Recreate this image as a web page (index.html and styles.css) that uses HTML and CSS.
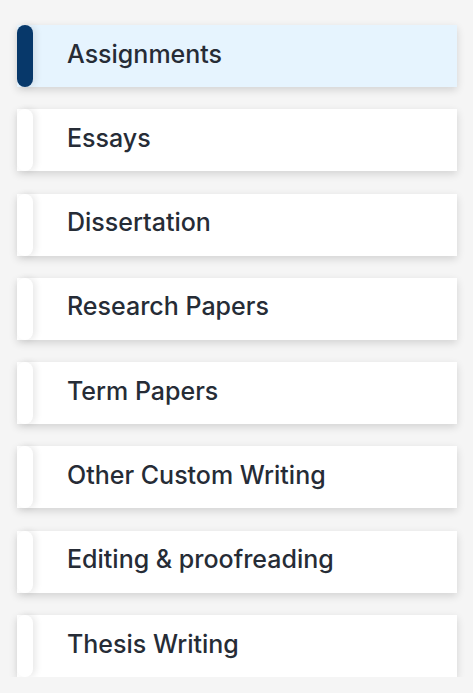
FILE: index.html
```html
<!DOCTYPE html>
<html lang="en">
  <head>
    <meta charset="UTF-8" />
    <meta name="viewport" content="width=device-width, initial-scale=1.0" />
    <title>Services</title>
    <link rel="stylesheet" href="styles.css">
  </head>
  <body>
    <ul class="service-list">
      <li class="service-item active"><span class="marker"></span><span class="label">Assignments</span></li>
      <li class="service-item"><span class="marker"></span><span class="label">Essays</span></li>
      <li class="service-item"><span class="marker"></span><span class="label">Dissertation</span></li>
      <li class="service-item"><span class="marker"></span><span class="label">Research Papers</span></li>
      <li class="service-item"><span class="marker"></span><span class="label">Term Papers</span></li>
      <li class="service-item"><span class="marker"></span><span class="label">Other Custom Writing</span></li>
      <li class="service-item"><span class="marker"></span><span class="label">Editing &amp; proofreading</span></li>
      <li class="service-item"><span class="marker"></span><span class="label">Thesis Writing</span></li>
    </ul>
  </body>
</html>
```
FILE: styles.css
```css
body {
  margin: 0;
  background: #f5f5f5;
  font-family: Inter, "Noto Sans", sans-serif;
}

.service-list {
  list-style: none;
  margin: 0;
  padding: 25px 16px 0 17px;
  display: flex;
  flex-direction: column;
  gap: 22.3px;
}

.service-item {
  display: flex;
  align-items: center;
  height: 62px;
  background: #ffffff;
  box-shadow: 0 3px 8px rgba(0, 0, 0, 0.14);
  color: #262c36;
  font-size: 25px;
  font-weight: 500;
}

.service-item.active {
  background: #e6f4fe;
}

.label {
  padding-bottom: 5px;
}

.marker {
  align-self: stretch;
  width: 16px;
  margin-right: 34px;
  border-radius: 8px;
  background: #ffffff;
  box-shadow: 3px 0 7px rgba(0, 0, 0, 0.09);
}

.active .marker {
  background: #07386a;
}
```
